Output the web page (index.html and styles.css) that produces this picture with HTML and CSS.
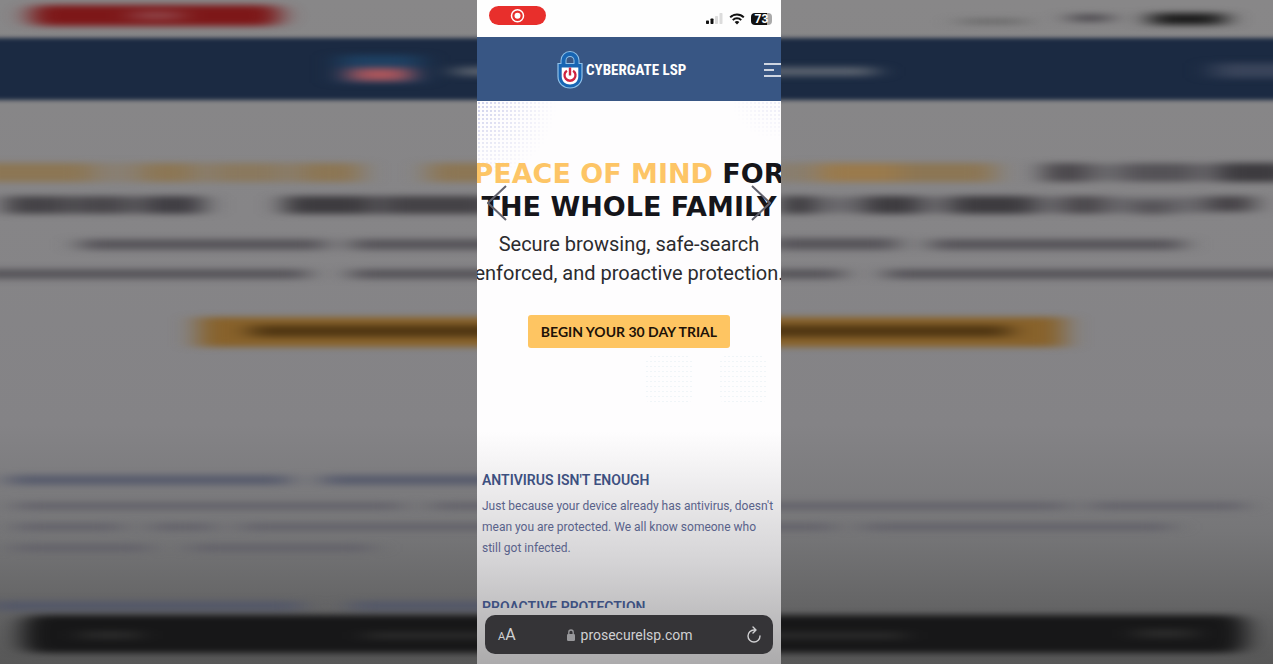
FILE: index.html
```html
<!DOCTYPE html>
<html lang="en">
<head>
<meta charset="utf-8">
<meta name="viewport" content="width=device-width, initial-scale=1">
<title>Cybergate LSP</title>
<link rel="stylesheet" href="styles.css">
</head>
<body>
<div class="stage">
  <svg class="backdrop" viewBox="0 0 1273 664" preserveAspectRatio="none" aria-hidden="true">
    <defs>
      <linearGradient id="shade" x1="0" y1="0" x2="0" y2="1">
        <stop offset="0" stop-color="#888788"/><stop offset=".64" stop-color="#848386"/>
        <stop offset=".8" stop-color="#767678"/><stop offset="1" stop-color="#575757"/>
      </linearGradient>
      <filter id="soft" filterUnits="userSpaceOnUse" x="-60" y="-20" width="1400" height="710" color-interpolation-filters="sRGB"><feGaussianBlur stdDeviation="13 3"/></filter>
      <filter id="edge" filterUnits="userSpaceOnUse" x="-60" y="-20" width="1400" height="710" color-interpolation-filters="sRGB"><feGaussianBlur stdDeviation="2 2"/></filter>
    </defs>
    <rect width="1273" height="664" fill="url(#shade)"/>
    <rect x="-50" y="38" width="1380" height="62" fill="#1b2a42" filter="url(#edge)"/>
    <g filter="url(#soft)">
      <rect x="30" y="5" width="250" height="21" rx="10" fill="#7d1718"/>
      <rect x="132" y="11" width="50" height="9" fill="#8d4145"/>
      <rect x="340" y="55" width="80" height="28" fill="#1e4062"/>
      <rect x="350" y="68" width="60" height="13" fill="#a9555b"/>
      <rect x="455" y="67" width="420" height="9" fill="#5a626e"/>
      <rect x="1213" y="63" width="90" height="15" fill="#39445a"/>
      <rect x="960" y="19" width="65" height="5" fill="#666"/>
      <rect x="1070" y="14" width="40" height="8" fill="#4e4b50"/>
      <rect x="1150" y="13" width="75" height="12" fill="#1c1c1c"/>
      <rect x="-30" y="163" width="390" height="19" fill="#8a7a62" opacity=".55"/>
      <g fill="#8c7654">
        <rect x="-30" y="163" width="122" height="19"/><rect x="142" y="163" width="52" height="19"/>
        <rect x="213" y="163" width="70" height="19" opacity=".65"/><rect x="300" y="163" width="61" height="19"/>
        <rect x="428" y="163" width="110" height="19"/><rect x="770" y="163" width="45" height="19" opacity=".5"/>
        <rect x="818" y="163" width="85" height="19" fill="#9a7a4c"/><rect x="900" y="163" width="95" height="19"/>
      </g>
      <rect x="1043" y="164" width="250" height="17" fill="#504e53" opacity=".5"/>
      <rect x="5" y="197" width="202" height="16" fill="#504e53" opacity=".6"/>
      <rect x="780" y="197" width="470" height="16" fill="#504e53" opacity=".5"/>
      <g fill="#3d3b3f">
        <rect x="1043" y="163" width="45" height="19" opacity=".7"/><rect x="1125" y="163" width="70" height="19" opacity=".5"/>
        <rect x="1218" y="163" width="75" height="19"/>
        <rect x="5" y="196" width="62" height="18" opacity=".8"/><rect x="74" y="196" width="56" height="18" opacity=".7"/><rect x="145" y="196" width="55" height="18" opacity=".9"/>
        <rect x="284" y="196" width="90" height="18"/><rect x="380" y="196" width="114" height="18" opacity=".9"/>
        <rect x="780" y="196" width="34" height="18"/><rect x="865" y="196" width="54" height="18"/>
        <rect x="952" y="196" width="82" height="18"/><rect x="1064" y="196" width="40" height="18" opacity=".7"/>
        <rect x="1135" y="201" width="35" height="14" opacity=".5"/><rect x="1208" y="196" width="46" height="15" opacity=".8"/>
      </g>
      <g fill="#58565b">
        <rect x="80" y="239" width="246" height="11"/><rect x="350" y="239" width="182" height="11"/>
        <rect x="770" y="238" width="128" height="12"/><rect x="930" y="239" width="253" height="11"/>
        <rect x="-30" y="269" width="338" height="10"/><rect x="350" y="269" width="178" height="10"/>
        <rect x="760" y="269" width="83" height="10"/><rect x="885" y="269" width="415" height="10"/>
      </g>
      <rect x="198" y="317" width="866" height="30" fill="#88622b"/>
      <rect x="250" y="325" width="760" height="12" fill="#513713"/>
      <g fill="#50566a" opacity=".8">
        <rect x="8" y="475" width="282" height="10"/><rect x="322" y="475" width="250" height="10"/>
        <rect x="-10" y="601" width="312" height="10"/><rect x="350" y="601" width="250" height="10"/>
      </g>
      <g fill="#626169" opacity=".85">
        <rect x="15" y="502" width="388" height="8"/><rect x="430" y="502" width="638" height="8"/><rect x="1090" y="502" width="155" height="8"/>
        <rect x="15" y="523" width="108" height="8"/><rect x="150" y="523" width="65" height="8"/><rect x="240" y="523" width="595" height="8"/>
        <rect x="862" y="523" width="310" height="8"/>
        <rect x="13" y="544" width="137" height="8"/><rect x="190" y="544" width="182" height="8"/>
      </g>
      <rect x="22" y="615" width="1224" height="38" rx="14" fill="#171718"/>
      <g fill="#2a2a2a"><rect x="80" y="631" width="60" height="8"/><rect x="365" y="632" width="540" height="7"/><rect x="1135" y="629" width="60" height="9"/></g>
    </g>
  </svg>

  <div class="phone">
    <div class="status">
      <svg class="record" viewBox="0 0 57 19" role="img" aria-label="Recording">
        <rect width="57" height="19" rx="9.5" fill="#e82f2c"/>
        <circle cx="28.500" cy="9.700" r="6" fill="none" stroke="#fff" stroke-width="1.500"/>
        <circle cx="28.500" cy="9.700" r="3" fill="#fff"/>
      </svg>
      <div class="indicators">
        <svg width="17" height="12" viewBox="0 0 17 12" aria-hidden="true">
          <rect x="0" y="7.500" width="3" height="3.500" rx=".7" fill="#111"/><rect x="4.500" y="5.500" width="3" height="5.500" rx=".7" fill="#111"/>
          <rect x="9" y="3" width="3" height="8" rx=".7" fill="#dcdcdc"/><rect x="13.500" y="0" width="3" height="11" rx=".7" fill="#dcdcdc"/>
        </svg>
        <svg width="16" height="12" viewBox="0 0 16 12" fill="none" stroke="#111" stroke-width="2" aria-hidden="true">
          <path d="M1.200 4.400a9.600 9.600 0 0 1 13.600 0M3.800 7.100a5.900 5.900 0 0 1 8.400 0"/><path d="M8 11.500 5.600 9.100a3.400 3.400 0 0 1 4.800 0z" fill="#111" stroke="none"/>
        </svg>
        <span class="battery">73</span>
      </div>
    </div>

    <header class="site-header">
      <a class="brand" href="#">
        <svg width="26" height="38" viewBox="0 0 26 38" aria-hidden="true">
          <path d="M6.500 13V9.500a6.500 6.500 0 0 1 13 0V13" fill="none" stroke="#8fc0e8" stroke-width="6"/>
          <path d="M1 12.500h24v13C25 32.500 19.500 37 13 37S1 32.500 1 25.500z" fill="#1765b3" stroke="#8fc0e8" stroke-width="1.200"/>
          <path d="M6.500 14V9.500a6.500 6.500 0 0 1 13 0V14" fill="none" stroke="#1765b3" stroke-width="4"/>
          <path d="M4.700 16.500h16.600v9c0 5-3.800 8-8.300 8s-8.300-3-8.300-8z" fill="#fff"/>
          <path d="M9.900 19.700a5.500 5.500 0 1 0 6.200 0" fill="none" stroke="#cf2441" stroke-width="2.300"/>
          <path d="M13 16.500v8" stroke="#cf2441" stroke-width="2.400"/>
        </svg>
        <span>CYBERGATE LSP</span>
      </a>
      <button class="menu" type="button" aria-label="Menu">
        <svg width="17" height="14" viewBox="0 0 17 14" stroke="#fff" stroke-width="1.600" aria-hidden="true"><path d="M0 1h17M0 7h10M0 13h17"/></svg>
      </button>
    </header>

    <main class="page">
      <section class="hero">
        <h1><span><em>PEACE OF MIND</em> FOR</span><span>THE WHOLE FAMILY</span></h1>
        <p><span>Secure browsing, safe-search</span><span>enforced, and proactive protection.</span></p>
        <a class="cta" href="#">BEGIN YOUR 30 DAY TRIAL</a>
        <div class="dots"><i></i><i></i></div>
        <button class="arrow prev" type="button" aria-label="Previous"><svg width="20" height="36" viewBox="0 0 20 36"><path d="M19 1 1 18l18 17"/></svg></button>
        <button class="arrow next" type="button" aria-label="Next"><svg width="20" height="36" viewBox="0 0 20 36"><path d="m1 1 18 17L1 35"/></svg></button>
      </section>
      <section class="feature">
        <h2>ANTIVIRUS ISN'T ENOUGH</h2>
        <p>Just because your device already has antivirus, doesn't mean you are protected. We all know someone who still got infected.</p>
      </section>
      <section class="feature">
        <h2>PROACTIVE PROTECTION</h2>
      </section>
    </main>

    <footer class="browser">
      <div class="address">
        <button class="text-size" type="button" aria-label="Text size"><small>A</small>A</button>
        <a class="url" href="#">
          <svg width="8" height="12" viewBox="0 0 8 12" aria-hidden="true"><rect y="5" width="8" height="7" rx="1.200" fill="#98989b"/><path d="M1.800 5.500V3.200a2.200 2.200 0 0 1 4.400 0v2.300" fill="none" stroke="#98989b" stroke-width="1.300"/></svg>
          prosecurelsp.com
        </a>
        <button class="reload" type="button" aria-label="Reload">
          <svg width="14" height="17" viewBox="0 0 14 17" fill="none" stroke="#d0d0d2" stroke-width="1.400" stroke-linecap="round" stroke-linejoin="round"><path d="M8.500 4H7a6 6 0 1 0 6 6M6 1l3 3-3 3"/></svg>
        </button>
      </div>
    </footer>
  </div>
</div>
</body>
</html>
```
FILE: styles.css
```css
* { box-sizing: border-box; }
body { margin: 0; font-family: Roboto, "Liberation Sans", sans-serif; }
h1, h2, p { margin: 0; }
button { padding: 0; border: 0; background: none; font: inherit; color: inherit; }
a { color: inherit; text-decoration: none; }
svg { display: block; }

.stage {
  position: relative;
  display: grid;
  grid-template-columns: 477fr 304fr 492fr;
  height: 100vh;
  overflow: hidden;
}
.backdrop { position: absolute; inset: 0; width: 100%; height: 100%; }

.phone {
  position: relative;
  grid-column: 2;
  min-width: 0;
  height: 100vh;
  display: flex;
  flex-direction: column;
  overflow: hidden;
  background: linear-gradient(#fefdfe 65%, #f4f3f4 70%, #d6d5d7 84%, #acabac 100%);
}

.status {
  flex: none;
  height: 37px;
  padding: 6px 9px 0 12px;
  display: flex;
  justify-content: space-between;
  align-items: flex-start;
  background: #fefefe;
}
.record { width: 57px; height: 19px; }
.indicators { display: flex; align-items: center; gap: 6px; padding-top: 7px; }
.battery {
  width: 21px;
  height: 12px;
  border-radius: 4px;
  background: linear-gradient(90deg, #111 75%, #aaa 75%);
  color: #fff;
  font-size: 12px;
  font-weight: 700;
  line-height: 12px;
  text-align: center;
}

.site-header {
  flex: none;
  height: 64px;
  display: grid;
  grid-template-columns: 80px auto 1fr;
  align-items: center;
  background: #385684;
}
.brand {
  grid-column: 2;
  display: flex;
  align-items: center;
  gap: 3px;
  padding-top: 2px;
  color: #fff;
  font-family: "Roboto Condensed", "Liberation Sans Narrow", Roboto, sans-serif;
  font-size: 15px;
  font-weight: 700;
  white-space: nowrap;
}
.menu { justify-self: end; padding-top: 2px; }

.page { flex: 1; min-height: 0; overflow: hidden; }
.hero {
  position: relative;
  height: 369px;
  padding-top: 56px;
  display: flex;
  flex-direction: column;
  align-items: center;
}
.hero::before {
  content: "";
  position: absolute;
  inset: 0 auto auto 0;
  width: 100%;
  height: 90px;
  background: radial-gradient(circle, #cfd1ec 1px, transparent 1px) 0 0 / 4px 4px;
  -webkit-mask-image: radial-gradient(80px 80px at 0 0, #000, transparent), radial-gradient(50px 40px at 100% 0, #0006, transparent);
  mask-image: radial-gradient(80px 80px at 0 0, #000, transparent), radial-gradient(50px 40px at 100% 0, #0006, transparent);
}
.hero h1, .hero p {
  position: relative;
  display: flex;
  flex-direction: column;
  align-items: center;
  white-space: nowrap;
}
.hero h1 {
  color: #15151a;
  font-family: "DejaVu Sans", sans-serif;
  font-size: 27px;
  font-weight: 700;
  line-height: 33px;
}
.hero em { color: #fdc566; font-style: normal; }
.hero p { margin-top: 7px; color: #2b2b2e; font-size: 20px; line-height: 29px; }
.cta {
  margin-top: 27px;
  padding: 0 13px;
  border-radius: 3px;
  background: #fec562;
  color: #1d1208;
  font-family: Lato, sans-serif;
  font-size: 14px;
  font-weight: 700;
  line-height: 33px;
  white-space: nowrap;
}
.dots { align-self: flex-end; display: flex; gap: 26px; margin: 6px 14px 0 0; }
.dots i {
  width: 48px;
  height: 52px;
  border-radius: 12px;
  background: radial-gradient(circle, #f0f5f8 1px, transparent 1px) 0 0 / 4px 5px;
}
.arrow { position: absolute; top: 84px; }
.arrow path { fill: none; stroke: #60606c; stroke-width: 2; }
.prev { left: 10px; }
.next { right: 10px; }

.feature { padding: 0 5px; color: #59628a; }
.feature + .feature { margin-top: 38px; }
.feature h2 { color: #3d5080; font-size: 14px; font-weight: 600; line-height: 20px; }
.feature p { margin-top: 6px; font-size: 12px; line-height: 21px; }

.browser { flex: none; padding: 7px 8px 10px; }
.address {
  height: 39px;
  padding: 0 12px 0 13px;
  border-radius: 10px;
  display: grid;
  grid-template-columns: 1fr auto 1fr;
  align-items: center;
  background: #353437;
  color: #d0d0d2;
}
.text-size { justify-self: start; font-size: 16px; }
.text-size small { font-size: 11px; }
.url { display: flex; align-items: center; gap: 6px; font-size: 14px; }
.reload { justify-self: end; }
```
